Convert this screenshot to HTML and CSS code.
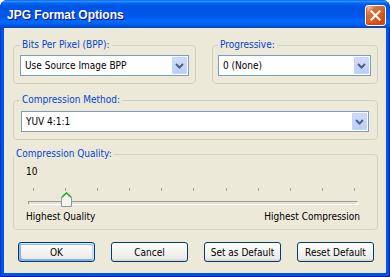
FILE: index.html
```html
<!DOCTYPE html>
<html lang="en">
<head>
    <meta charset="UTF-8">
    <meta name="viewport" content="width=device-width, initial-scale=1.0">
    <title>JPG Format Options</title>
    <link rel="stylesheet" href="styles.css">
</head>
<body>

    <div class="window">
        <!-- Barra de título -->
        <div class="titlebar">
            <span class="title">JPG Format Options</span>
            <button class="close" aria-label="Close">
                <svg width="11" height="11" viewBox="0 0 11 11"><path d="M1.5 1.5 L9.5 9.5 M9.5 1.5 L1.5 9.5" stroke="#fff" stroke-width="2" stroke-linecap="square"/></svg>
            </button>
        </div>

        <div class="client">
            <div class="row">
                <fieldset class="group bpp">
                    <legend>Bits Per Pixel (BPP):</legend>
                    <div class="combo">
                        <span class="combo-text">Use Source Image BPP</span>
                        <span class="combo-arrow"><svg width="9" height="6" viewBox="0 0 9 6"><path d="M1 1 L4.5 4.5 L8 1" fill="none" stroke="#4d6185" stroke-width="2"/></svg></span>
                    </div>
                </fieldset>

                <fieldset class="group prog">
                    <legend>Progressive:</legend>
                    <div class="combo">
                        <span class="combo-text">0 (None)</span>
                        <span class="combo-arrow"><svg width="9" height="6" viewBox="0 0 9 6"><path d="M1 1 L4.5 4.5 L8 1" fill="none" stroke="#4d6185" stroke-width="2"/></svg></span>
                    </div>
                </fieldset>
            </div>

            <fieldset class="group method">
                <legend>Compression Method:</legend>
                <div class="combo">
                    <span class="combo-text">YUV 4:1:1</span>
                    <span class="combo-arrow"><svg width="9" height="6" viewBox="0 0 9 6"><path d="M1 1 L4.5 4.5 L8 1" fill="none" stroke="#4d6185" stroke-width="2"/></svg></span>
                </div>
            </fieldset>

            <fieldset class="group quality">
                <legend>Compression Quality:</legend>
                <div class="value">10</div>
                <div class="ticks">
                    <i></i><i></i><i></i><i></i><i></i><i></i><i></i><i></i><i></i><i></i><i></i>
                </div>
                <div class="track">
                    <span class="thumb" style="left: 32px">
                        <svg width="11" height="15" viewBox="0 0 11 15">
                            <path d="M0.5 5 L5.5 0.5 L10.5 5 L10.5 14.5 L0.5 14.5 Z" fill="#f5f4ef" stroke="#8c9aa8"/>
                            <path d="M1 5.2 L5.5 1 L10 5.2" fill="none" stroke="#21b021" stroke-width="1.4"/>
                        </svg>
                    </span>
                </div>
                <div class="scale">
                    <span>Highest Quality</span>
                    <span>Highest Compression</span>
                </div>
            </fieldset>

            <div class="buttons">
                <button class="btn default">OK</button>
                <button class="btn">Cancel</button>
                <button class="btn">Set as Default</button>
                <button class="btn">Reset Default</button>
            </div>
        </div>
    </div>

</body>
</html>
```

FILE: styles.css
```css
/* Geral */
* {
    box-sizing: border-box;
    margin: 0;
    padding: 0;
}

body {
    background: #ffffff;
    font-family: 'DejaVu Sans Condensed', 'DejaVu Sans', sans-serif;
    font-size: 10px;
    color: #000;
}

/* Janela */
.window {
    width: 390px;
    height: 277px;
    display: flex;
    flex-direction: column;
    background: #0054e3;
    border-radius: 8px 8px 0 0;
    box-shadow: inset 1px 0 #0831d9, inset -1px 0 #001ea0, inset 0 -1px #001ea0;
}

.titlebar {
    height: 28px;
    display: flex;
    align-items: center;
    justify-content: space-between;
    padding: 0 4px 0 7px;
    border-radius: 8px 8px 0 0;
    background: linear-gradient(to bottom, #0058ee 0%, #3593ff 4%, #288eff 6%, #127dff 8%, #036ffc 10%, #0262ee 14%, #0057e5 20%, #0054e3 24%, #0055eb 56%, #005bf5 66%, #026afe 76%, #0062ef 86%, #0052d6 92%, #0046c8 100%);
}

.title {
    color: #fff;
    font-family: 'Liberation Sans', Arial, sans-serif;
    font-weight: bold;
    font-size: 12px;
    text-shadow: 1px 1px #0f1089;
    padding-top: 1px;
}

.close {
    width: 21px;
    height: 21px;
    display: flex;
    align-items: center;
    justify-content: center;
    border: 1px solid #fff;
    border-radius: 3px;
    background: radial-gradient(circle at 90% 90%, #cc4600 0%, #dc6527 55%, #cd7546 70%, #ffccb2 90%, #fff 100%);
    box-shadow: inset 0 -1px 2px 1px #da4600;
    margin-top: 2px;
}

.client {
    flex: 1;
    margin: 0 4px 4px 4px;
    background: #ece9d8;
    padding: 0 8px 0 9px;
}

/* Grupos */
.row {
    display: flex;
    gap: 16px;
    margin-top: 11px;
}

.group {
    border: 1px solid #d0d0bf;
    border-radius: 4px;
    padding: 4px 6px 7px 6px;
}

.group legend {
    color: #0046d5;
    line-height: 12px;
    padding: 0 2px;
}

.bpp {
    width: 183px;
}

.prog {
    width: 166px;
    padding-left: 5px;
}

.method {
    margin-top: 10px;
    padding: 5px 8px 7px 7px;
}

.method legend {
    margin-left: -1px;
}

/* Combo */
.combo {
    height: 21px;
    display: flex;
    align-items: center;
    justify-content: space-between;
    background: #fff;
    border: 1px solid #7f9db9;
    padding: 1px;
}

.combo-text {
    padding-left: 3px;
    white-space: nowrap;
}

.combo-arrow {
    width: 15px;
    height: 17px;
    display: flex;
    align-items: center;
    justify-content: center;
    background: linear-gradient(to bottom, #cfdcfd, #bccdf8);
    border: 1px solid #c3d3fd;
    border-radius: 1px;
}

/* Qualidade */
.quality {
    margin-top: 8px;
    padding: 6px 0 6px 0;
}

.value {
    line-height: 12px;
    padding-left: 12px;
}

.ticks {
    display: flex;
    justify-content: space-between;
    height: 3px;
    margin: 10px 0 0 19px;
    width: 322px;
}

.ticks i {
    width: 1px;
    background: #a7a6aa;
}

.track {
    position: relative;
    margin: 10px 0 0 14px;
    width: 330px;
    height: 4px;
    border: 1px solid;
    border-color: #9d9c99 #fff #fff #9d9c99;
    background: #e5e3d8;
}

.thumb {
    position: absolute;
    top: -10px;
    line-height: 0;
}

.scale {
    display: flex;
    justify-content: space-between;
    line-height: 12px;
    margin-top: 6px;
    padding: 0 17px 0 12px;
}

/* Botões */
.buttons {
    display: flex;
    gap: 16px;
    margin-top: 12px;
    padding-left: 5px;
}

.btn {
    width: 77px;
    height: 20px;
    font-family: 'DejaVu Sans Condensed', 'DejaVu Sans', sans-serif;
    font-size: 10px;
    color: #000;
    border: 1px solid #003c74;
    border-radius: 3px;
    background: linear-gradient(to bottom, #fff, #ecebe6 86%, #d6d0c5);
}

.btn.default {
    box-shadow: inset -1px 1px #cee7ff, inset 1px 2px #98b8ea, inset -2px 2px #bcd4f6, inset 1px -1px #89ade4, inset 2px -2px #89ade4;
}
```
